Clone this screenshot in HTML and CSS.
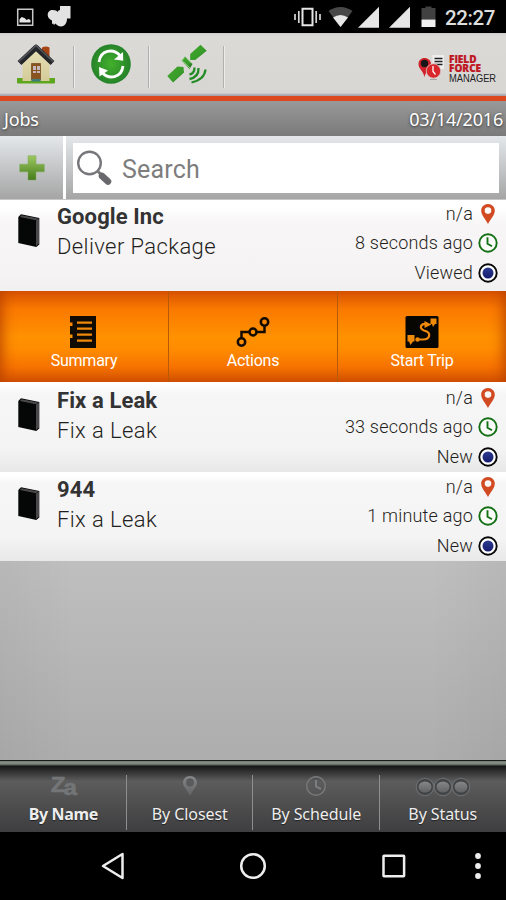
FILE: index.html
```html
<!DOCTYPE html>
<html lang="en">
<head>
<meta charset="utf-8">
<title>Jobs</title>
<link rel="stylesheet" href="styles.css">
</head>
<body>
<svg class="defs" width="0" height="0" aria-hidden="true">
  <defs>
    <linearGradient id="plusG" x1="0" y1="0" x2="0" y2="1"><stop offset="0" stop-color="#9cc860"/><stop offset="1" stop-color="#467c1c"/></linearGradient>
    <radialGradient id="syncG"><stop offset="0" stop-color="#43b02c"/><stop offset="1" stop-color="#258329"/></radialGradient>
    <linearGradient id="satG" x1="0" y1="0" x2="1" y2="1"><stop offset="0" stop-color="#43a62d"/><stop offset=".6" stop-color="#389c2a"/><stop offset="1" stop-color="#17591b"/></linearGradient>
    <linearGradient id="wallG" x1="0" y1="0" x2="0" y2="1"><stop offset="0" stop-color="#e6e0b8"/><stop offset="1" stop-color="#d5cb98"/></linearGradient>
    <linearGradient id="blueG" x1="0" y1="0" x2="0" y2="1"><stop offset="0" stop-color="#2c3b91"/><stop offset="1" stop-color="#151c6e"/></linearGradient>
    <linearGradient id="dimG" x1="0" y1="0" x2="0" y2="1"><stop offset="0" stop-color="#858789"/><stop offset="1" stop-color="#606264"/></linearGradient>
  </defs>
  <symbol id="book" viewBox="0 0 22 34">
    <path d="M.3 3 3 .3 21.3 4v26.500l-3 2.500L.3 29z" fill="#050606"/>
    <path d="M18 6.500 21 4.500V29.500L18 32z" fill="#4b484b"/>
    <path d="M2 3 3.500 1.300 20.500 4.500 18 6.200z" fill="#4b484b"/>
  </symbol>
  <symbol id="pin" viewBox="0 0 14 20">
    <path fill-rule="evenodd" d="M7 0C3 0 .2 3 .2 6.700.2 11 4.500 15 7 20c2.500-5 6.800-9 6.800-13.300C13.800 3 11 0 7 0zm0 3.300a3.300 3.300 0 1 1 0 6.600 3.300 3.300 0 0 1 0-6.600z" fill="#d24a22"/>
  </symbol>
  <symbol id="clock" viewBox="0 0 20 20">
    <circle cx="10" cy="10" r="8.700" fill="#fbfcfa" stroke="#147014" stroke-width="1.900"/>
    <path d="M9.500 4.200v6.500l4.500 2.600" fill="none" stroke="#147014" stroke-width="1.900"/>
  </symbol>
  <symbol id="status" viewBox="0 0 20 20">
    <circle cx="10" cy="10" r="8.700" fill="#fff" stroke="#080808" stroke-width="1.900"/>
    <circle cx="10" cy="10" r="5.500" fill="url(#blueG)"/>
  </symbol>
</svg>

<div class="screen">
  <header class="statusbar">
    <svg width="56" height="24" viewBox="0 0 56 24">
      <path d="M1.700 4.200h15v16h-15z" fill="none" stroke="#c9c9c9" stroke-width="1.500"/>
      <path d="M3.500 17.500v-3l2-2.500 3 1 2 2 2-1 2 1v2.500z" fill="#e6e6e6"/>
      <path d="M44 1h10.500v12.500H51c0 4-2 8-6 8-2 0-4-1-5.500-3l-1.500 1.500-.8-1.500-1.200.5v-3.500c-2.500-1-4.300-3-4.300-5.500 0-3 2-5 5-5 2.500 0 4.500.8 5 2 .5-1.200 1-2 2.300-2z" fill="#e2e2e2"/>
    </svg>
    <span class="spacer"></span>
    <svg class="signals" width="143" height="24" viewBox="0 0 143 24">
      <path d="M8.500 3.700h10v16.500h-10z" fill="none" stroke="#e6e6e6" stroke-width="2"/>
      <path d="M4.800 6v12M1 9v6M22.200 6v12M26 9v6" stroke="#d6d6d6" stroke-width="1.700"/>
      <path d="M34.500 6Q46.500-2 58.500 6L46.500 22z" fill="#484848"/>
      <path d="M39 12.500q7.500-5 15 0L46.500 22z" fill="#e8e8e8"/>
      <path d="M64 22.700 85 1.700v21zM95 22.700 116 1.700v21z" fill="#e6e6e6"/>
      <path d="M127.500 3h4V1.500h6V3h4V14.500h-14z" fill="#414141"/>
      <path d="M127.500 14.500h14V22h-14z" fill="#efefef"/>
    </svg>
    <span class="time">22:27</span>
  </header>

  <nav class="toolbar">
    <div class="tool">
      <svg width="40" height="42" viewBox="0 0 40 42">
        <path d="M1 35h38v4.500q0 1-1 1H2q-1 0-1-1z" fill="#5fa61f"/>
        <path d="M26 4.500q4-2 7.500 0V16L26 12z" fill="#a64513"/>
        <path d="M6.500 18 20 5l13.500 13v20h-27z" fill="url(#wallG)"/>
        <path d="M15.500 20.500h9V37h-9z" fill="#895420" stroke="#70451d" stroke-width=".7"/>
        <path d="M17 23h3v4h-3zm4 0h3v4h-3zm-4 5h3v2h-3zm4 0h3v2h-3z" fill="#c5b8bd"/>
        <path d="M15.500 36h9v2.500h-9z" fill="#3d7d7c"/>
        <path d="m3.500 20 16.500-15.500L36.500 20" fill="none" stroke="#25262a" stroke-width="5.500" stroke-linejoin="round"/>
        <path d="m3 18.500 17-16 17 16" fill="none" stroke="#55575b" stroke-width="1.500"/>
      </svg>
    </div>
    <div class="tool">
      <svg width="40" height="40" viewBox="0 0 40 40">
        <circle cx="20" cy="20" r="19.800" fill="url(#syncG)"/>
        <path d="M8 18C9.500 6 22 4 29 11.500M32 22C30.500 34 18 36 11 28.500" fill="none" stroke="#fff" stroke-width="2.800"/>
        <path d="m32 8 .2 8.800-9.200-1.300zM8.500 32.500 8 23l9 3.500z" fill="#fff"/>
      </svg>
    </div>
    <div class="tool">
      <svg width="40" height="40" viewBox="0 0 40 40">
        <path d="m33.500.8 6.200 6-11.500 9.200h-5V10z" fill="url(#satG)"/>
        <path d="m10.500 22.500 6 .5.500 5.500L6 38.500 .3 32z" fill="url(#satG)"/>
        <path d="m18 12.500 7.500 7.500-3 5-8-8.500z" fill="url(#satG)"/><path d="m17.500 13.500-2.500 3 8 7.500M20 14.500l5 5" fill="none" stroke="#a2d89b" stroke-width=".9"/>
        <path d="M22.500 30.500q5-1 5-7M22.500 35q9.500-2 9-11M24.500 38.500q13-3 14-13" fill="none" stroke="#238b25" stroke-width="2.300"/>
      </svg>
    </div>
    <span class="spacer"></span>
    <div class="brand">
      <svg width="28" height="26" viewBox="0 0 28 26">
        <path d="M14.500 0H26v14H14.500z" fill="#eee"/>
        <path d="M16.500 3.500h8M16.500 6.500h8M16.500 9.500h8" stroke="#222" stroke-width="1.300"/>
        <path d="M6.500 3C3 3 .5 5.500.5 9c0 5 4.500 6 6 13C8 15 13 14 13 9c0-3.500-3-6-6.500-6z" fill="#d0222a"/>
        <circle cx="6.500" cy="8.500" r="3.700" fill="#171717"/>
        <circle cx="15.500" cy="16" r="7.200" fill="#d9262b" stroke="#dcc5c3" stroke-width=".8"/>
        <path d="M15 11v5.500l2.500 3" fill="none" stroke="#fff" stroke-width="1.300"/>
        <path d="M12 24.500h7" stroke="#a9a4a2"/>
      </svg>
      <div class="brand-text"><b>FIELD</b><b>FORCE</b><span>MANAGER</span></div>
    </div>
  </nav>

  <div class="titlebar"><span>Jobs</span><span>03/14/2016</span></div>

  <div class="searchbar">
    <div class="add"><svg width="26" height="26" viewBox="0 0 26 26"><path d="M9 .8h8v8.400h8.300v7.600H17V25H9v-8.200H.7V9.200H9z" fill="url(#plusG)" stroke="#7da85b" stroke-width=".5"/></svg></div>
    <div class="searchwrap"><div class="search">
      <svg width="36" height="36" viewBox="0 0 36 36"><circle cx="12.500" cy="13" r="11.300" fill="none" stroke="#77777b" stroke-width="2.400"/><path d="m21 21.500 4 4" stroke="#77777b" stroke-width="3"/><path d="m25 26 6 5.500" stroke="#68686d" stroke-width="6.500" stroke-linecap="round"/></svg>
      <span>Search</span>
    </div></div>
  </div>

  <main class="content">
    <article class="job first">
      <svg class="book" width="22" height="34"><use href="#book"/></svg>
      <div class="names"><b>Google Inc</b><span>Deliver Package</span></div>
      <div class="meta">
        <div><span>n/a</span><svg width="20" height="20"><use href="#pin"/></svg></div>
        <div><span>8 seconds ago</span><svg width="20" height="20"><use href="#clock"/></svg></div>
        <div><span>Viewed</span><svg width="20" height="20"><use href="#status"/></svg></div>
      </div>
    </article>
    <div class="actions">
      <div class="action">
        <svg width="34" height="34" viewBox="0 0 34 34"><path d="M3 1h26v32H3V23h2.500v-3.500H3V11h2.500V7.500H3z" fill="#100b03"/><path d="M10 7.700h15M10 13.700h15M10 19.700h15M10 25.700h15" stroke="#ef8a0b" stroke-width="2.200"/></svg>
        <span>Summary</span>
      </div>
      <div class="action">
        <svg width="34" height="34" viewBox="0 0 34 34"><g fill="none" stroke="#130b02" stroke-width="2.500"><circle cx="5.500" cy="27" r="3.700"/><circle cx="17" cy="17" r="3.500"/><circle cx="28.500" cy="7" r="3.700"/><path d="M5.500 23v-6h8M20.500 17h8v-6"/></g></svg>
        <span>Actions</span>
      </div>
      <div class="action">
        <svg width="34" height="34" viewBox="0 0 34 34"><rect x=".5" y="1" width="33" height="32" rx="1.500" fill="#080603"/><g fill="#ef8a0b"><path d="M2.500 20H9.500v6.500H8L5.500 30 4 26.500H2.500zM25.500 3.500h6V9H30l-2 3-1-3h-1.500zM19.500 6l7 3.500-7 3.500z"/><circle cx="12.500" cy="24.500" r="2.200"/></g><path d="M22 9c-7-1-8 5-3 6.500 8 2 6 9-1 9h-5" fill="none" stroke="#ef8a0b" stroke-width="2.200"/></svg>
        <span>Start Trip</span>
      </div>
    </div>
    <article class="job">
      <svg class="book" width="22" height="34"><use href="#book"/></svg>
      <div class="names"><b>Fix a Leak</b><span>Fix a Leak</span></div>
      <div class="meta">
        <div><span>n/a</span><svg width="20" height="20"><use href="#pin"/></svg></div>
        <div><span>33 seconds ago</span><svg width="20" height="20"><use href="#clock"/></svg></div>
        <div><span>New</span><svg width="20" height="20"><use href="#status"/></svg></div>
      </div>
    </article>
    <article class="job last">
      <svg class="book" width="22" height="34"><use href="#book"/></svg>
      <div class="names"><b>944</b><span>Fix a Leak</span></div>
      <div class="meta">
        <div><span>n/a</span><svg width="20" height="20"><use href="#pin"/></svg></div>
        <div><span>1 minute ago</span><svg width="20" height="20"><use href="#clock"/></svg></div>
        <div><span>New</span><svg width="20" height="20"><use href="#status"/></svg></div>
      </div>
    </article>
  </main>

  <nav class="tabs">
    <div class="tab active"><div class="sort"><i>Z</i><i class="low">a</i></div><span>By Name</span></div>
    <div class="tab"><svg width="20" height="22" viewBox="0 0 20 22"><path fill-rule="evenodd" d="M10 0C5.500 0 3 3.300 3 6.700 3 11 7.500 14 10 20c2.500-6 7-9 7-13.300C17 3.300 14.500 0 10 0zm0 2.500a4 4 0 1 1 0 8 4 4 0 0 1 0-8z" fill="url(#dimG)"/></svg><span>By Closest</span></div>
    <div class="tab"><svg width="22" height="22" viewBox="0 0 22 22"><circle cx="11" cy="10" r="9.300" fill="none" stroke="#77787a" stroke-width="1.500"/><path d="M11 4v6.500l5 2.500" fill="none" stroke="#7c7d80" stroke-width="2"/></svg><span>By Schedule</span></div>
    <div class="tab"><svg width="56" height="22" viewBox="0 0 56 22"><g fill="#414345" stroke="#696b6d" stroke-width="1.300"><circle cx="10" cy="11" r="8.700"/><circle cx="28" cy="11" r="8.700"/><circle cx="46" cy="11" r="8.700"/></g><g fill="url(#dimG)"><ellipse cx="10" cy="11" rx="6.500" ry="5.500"/><ellipse cx="28" cy="11" rx="6.500" ry="5.500"/><ellipse cx="46" cy="11" rx="6.500" ry="5.500"/></g></svg><span>By Status</span></div>
  </nav>

  <footer class="navbar">
    <svg width="24" height="28" viewBox="0 0 24 28"><path d="M21.500 2v24L2 14z" fill="none" stroke="#eee" stroke-width="2.500" stroke-linejoin="round"/></svg>
    <svg width="28" height="28" viewBox="0 0 28 28"><circle cx="14" cy="14" r="11.800" fill="none" stroke="#eee" stroke-width="2.500"/></svg>
    <svg width="26" height="24" viewBox="0 0 26 24"><rect x="2.500" y="1.700" width="20.600" height="20.600" rx=".5" fill="none" stroke="#eee" stroke-width="2.500"/></svg>
    <svg class="more" width="8" height="28" viewBox="0 0 8 28"><g fill="#eee"><circle cx="4" cy="4" r="2.900"/><circle cx="4" cy="14" r="2.900"/><circle cx="4" cy="24" r="2.900"/></g></svg>
  </footer>
</div>
</body>
</html>
```
FILE: styles.css
```css
* { box-sizing: border-box; }
body { margin: 0; background: #000; font-family: Roboto, sans-serif; }
svg { display: block; flex: none; }
.defs { position: absolute; }
.screen { width: 506px; height: 900px; display: flex; flex-direction: column; overflow: hidden; }
.spacer { flex: 1; }

.statusbar { height: 33px; background: #000; display: flex; align-items: flex-start; padding: 5px 10px 0 16px; }
.time { color: #dedede; font-size: 20.500px; line-height: 26px; width: 51px; margin-left: 8px; white-space: nowrap; font-weight: 500; letter-spacing: -.4px; }

.toolbar { height: 68px; display: flex; padding: 6px 11px 0 0; background: linear-gradient(#cfcdcb, #dcdad7 3px, #d8d6d3 60px, #aaa6ad 62px); border-bottom: 5px solid #dc491f; }
.tool { width: 75px; height: 50px; display: flex; justify-content: flex-end; align-items: center; padding-right: 19px; position: relative; }
.tool:nth-child(3) { padding-right: 18px; }
.tool::after { content: ""; position: absolute; right: 0; top: 7px; width: 2px; height: 42px; background: linear-gradient(90deg, #a8a6a5 50%, #f2f1ef 50%); opacity: .8; }
.brand { display: flex; padding-top: 16px; width: 77px; gap: 3px; }
.brand-text { display: flex; flex-direction: column; width: 46px; font-family: "Liberation Sans", sans-serif; color: #222; }
.brand-text b { color: #be1622; font: 800 10px/9px "Open Sans", sans-serif; letter-spacing: 0; -webkit-text-stroke: .2px #be1622; }
.brand-text span { font-size: 11.500px; line-height: 10px; transform: scaleX(.81); transform-origin: 0 0; }

.titlebar { height: 35px; display: flex; justify-content: space-between; padding: 0 3px 0 4px; background: linear-gradient(#999, #7a7a7a); font: 18px/36px "Noto Sans", sans-serif; letter-spacing: -.2px; color: #fff; text-shadow: 0 1px 3px #333; }

.searchbar { height: 64px; display: flex; gap: 3px; background: #fff; border-bottom: 1px solid #c6c6c6; }
.add { width: 63px; display: flex; align-items: center; justify-content: center; background: linear-gradient(#e4e8eb, #a5a5a5); }
.searchwrap { flex: 1; padding: 7px 7px 6px; background: linear-gradient(#e4e8eb, #a5a5a5); }
.search { height: 50px; background: #fff; display: flex; align-items: center; gap: 9px; padding-left: 4px; color: #7d7d7d; font-size: 25px; letter-spacing: .2px; }
.search span { padding-top: 3px; }

.content { flex: 1; min-height: 0; background: linear-gradient(90deg, rgba(0,0,0,.04), transparent 15%, transparent 85%, rgba(0,0,0,.04)), linear-gradient(#bfbfbf 361px, #adadad); }
.job { height: 90px; display: flex; padding: 6px 8px 0 18px; background: linear-gradient(#fff 3px, #f7f6f7 12px, #f5f4f5 65px, #e8e8e8 90px); color: #1f1f20; }
.job.first { height: 91px; padding-top: 4px; background: linear-gradient(#fff 7px, #f7f5f6 25px, #f5f3f4 75px, #f1f0f1); }
.job.last { height: 89px; padding-top: 5px; }
.book { margin: 10px 0 0; }
.names { flex: 1; display: flex; flex-direction: column; margin-left: 17px; font-size: 22px; line-height: 30px; letter-spacing: .4px; font-weight: 300; margin-top: -2px; }
.names b { color: #333; font-weight: 700; letter-spacing: .1px; }
.meta { display: flex; flex-direction: column; font-size: 18px; font-weight: 300; letter-spacing: .2px; }
.meta div { flex: none; height: 29.400px; display: flex; justify-content: flex-end; gap: 5px; line-height: 20px; }

.actions { height: 91px; display: flex; background: linear-gradient(#d65200, #fa7900 18px, #ff9100 46px, #ff8c00 58px, #f67200 76px, #cf4f00); box-shadow: inset 14px 0 14px -12px #b94300, inset -14px 0 14px -12px #b94300; }
.action { flex: 1; display: flex; flex-direction: column; align-items: center; padding-top: 24px; color: #fff; font-size: 16px; letter-spacing: -.25px; line-height: 20px; border-right: 1px solid #b65a0a; }
.action:last-child { border: 0; }
.action svg { margin-bottom: 2px; }

.tabs { height: 72px; display: flex; border-top: 1px solid #191b19; background: linear-gradient(#737873, #8b928b 2px, #55635a 4px, #151515 5px, #343434 11px, #5c5c5c 20px, #3e3e40); font: 16px/20px "Noto Sans", sans-serif; color: #eee; }
.tab { flex: 1; display: flex; flex-direction: column; align-items: center; padding-top: 15px; position: relative; text-shadow: 0 1px 1px #222; letter-spacing: -.08px; white-space: nowrap; }
.tab span { margin-top: 6px; }
.tab:not(:last-child)::after { content: ""; position: absolute; right: 0; top: 14px; bottom: 2px; width: 1px; background: #8e8e8e; }
.active { font-weight: 700; letter-spacing: -.35px; }
.sort { height: 22px; display: flex; color: #737577; font: 800 22px/18px "Liberation Sans", sans-serif; letter-spacing: -1px; -webkit-text-stroke: .6px #737577; text-shadow: none; transform: scaleX(1.1); }
.sort i { font-style: normal; }
.sort .low { padding-top: 3px; margin-left: -1px; }

.navbar { height: 68px; background: #000; display: flex; align-items: center; padding: 0 24px 0 101px; }
.navbar svg + svg { margin-left: 114px; }
.navbar .more.more { margin-left: auto; }
```
